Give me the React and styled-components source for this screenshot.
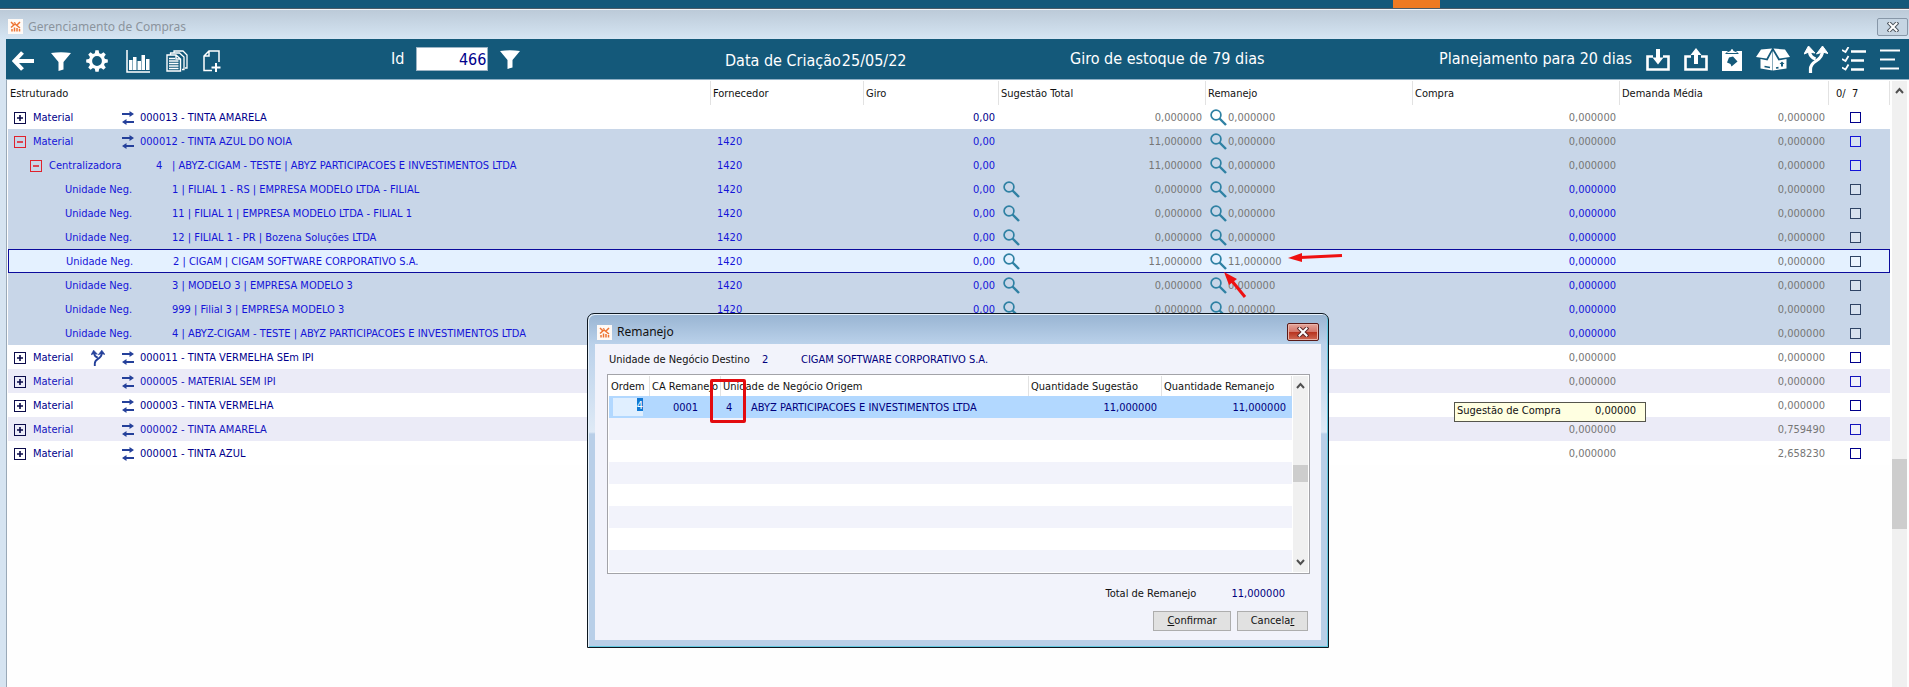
import React from 'react';
import styled, { createGlobalStyle, css } from 'styled-components';

const GlobalStyle = createGlobalStyle`
  * { box-sizing: border-box; }
  body {
    margin: 0;
    background: #fdfdfd;
    font-family: "DejaVu Sans Condensed", "DejaVu Sans", Tahoma, sans-serif;
    font-size: 11px;
    line-height: 16px;
    overflow-x: hidden;
  }
  button, input { font: inherit; }
  #root { min-height: 100vh; display: flex; }
`;

const Screen = styled.div`
  position: relative;
  flex: 1;
  min-width: 0;
  display: flex;
  flex-direction: column;
`;

const AppStrip = styled.div`
  height: 9px;
  background: #14597a;
  border-bottom: 1px solid #4b5c68;
  display: flex;
  justify-content: flex-end;
  padding-right: 469px;
`;

const ActiveMark = styled.span`
  width: 47px;
  height: 8px;
  background: #ee7a22;
`;

const MainWindow = styled.main`
  flex: 1;
  display: flex;
  flex-direction: column;
  background: #d6e4f1;
`;

const TitleBar = styled.header`
  height: 30px;
  padding: 4px 1px 0 8px;
  display: flex;
  align-items: center;
  gap: 5px;
  border-top: 1px solid #f2f5f8;
  background: linear-gradient(#bccad8, #d5e5f3);
  color: #8b949d;
`;

const WindowTitle = styled.h1`
  margin: 0;
  flex: 1;
  font: inherit;
  font-family: "Noto Sans", sans-serif;
  font-size: 12px;
`;

const TitleClose = styled.button`
  width: 31px;
  height: 18px;
  padding: 0;
  display: grid;
  place-items: center;
  border: 1px solid #8797a8;
  border-radius: 2px;
  background: #c6d5e3;
`;

const WindowBody = styled.div`
  flex: 1;
  margin-left: 6px;
  display: flex;
  flex-direction: column;
  background: #fefefe;
`;

const Toolbar = styled.div`
  height: 41px;
  display: flex;
  align-items: center;
  background: #14597a;
  border-bottom: 1px solid #8fb0c5;
  color: #fff;
  font-size: 16px;
  line-height: 20px;
`;

const ToolGroup = styled.div`
  display: flex;
  align-items: center;
  width: ${(p) => p.$width || 'auto'};
  margin-left: ${(p) => (p.$end ? 'auto' : 0)};
  padding: ${(p) => p.$pad || 0};
  gap: ${(p) => p.$gap || 0};
  white-space: nowrap;
`;

const ToolButton = styled.button`
  flex: none;
  width: ${(p) => p.$width || 24}px;
  height: 28px;
  padding: 0;
  border: 0;
  background: none;
  color: #fff;
  display: flex;
  align-items: center;
  justify-content: center;

  svg { flex: none; }
`;

const IdField = styled.input`
  width: 72px;
  height: 24px;
  margin: 0 12px;
  padding: 0 1px;
  border: 1px solid #9db4c4;
  background: #fff;
  color: #00008b;
  text-align: right;
`;

const Content = styled.div`
  flex: 1;
  display: flex;
  padding: 1px 2px 0 1px;
  border-left: 1px solid #9aa9b7;
`;

const GridArea = styled.div`
  flex: 1;
  min-width: 0;
`;

const Grid = styled.table`
  width: 100%;
  table-layout: fixed;
  border-collapse: separate;
  border-spacing: 0;
  white-space: pre;
`;

const HeadCell = styled.th`
  height: ${(p) => p.$height || 24}px;
  padding: 2px 2px 0 ${(p) => p.$indent || 2}px;
  border-right: 1px solid #e2e2e2;
  background: #fff;
  color: #111;
  font-weight: normal;
  text-align: left;
`;

const tones = {
  plain: ['#fff', '#00008b'],
  alt: ['#ebebf7', '#1414bd'],
  open: ['#c8d6e8', '#1414d8'],
  current: ['#e4f1ff', '#1414d8'],
};

const Row = styled.tr`
  height: 24px;
  color: ${(p) => tones[p.$tone][1]};
  & > td {
    background: ${(p) => tones[p.$tone][0]};
    ${(p) => p.$tone === 'current' && css`
      border-top: 1px solid #0b0b9c;
      border-bottom: 1px solid #0b0b9c;
      &:first-child { border-left: 1px solid #0b0b9c; }
      &:last-child { border-right: 1px solid #0b0b9c; }
    `}
  }
`;

const Cell = styled.td`
  padding: ${(p) => (p.$flush ? 0 : 2)}px ${(p) => (p.$pad === undefined ? 4 : p.$pad)}px 0;
  text-align: ${(p) => p.$align || 'left'};
  color: ${(p) => (p.$muted ? '#767676' : 'inherit')};
`;

const Flex = styled.div`
  display: flex;
  align-items: center;
  height: 20px;
  justify-content: ${(p) => (p.$spread ? 'space-between' : 'flex-start')};
`;

const TreeCell = styled(Flex)`
  padding-left: ${(p) => [6, 22, 37][p.$level]}px;
`;

const Toggle = styled.button`
  width: 12px;
  height: 12px;
  padding: 0;
  margin-right: 7px;
  display: grid;
  place-items: center;
  background: transparent;
  border: 1px solid ${(p) => (p.$open ? '#e0222c' : '#0b0b4a')};
  color: ${(p) => (p.$open ? '#e0222c' : '#0b0b4a')};
`;

const Kind = styled.span`
  width: ${(p) => [58, 107, 107][p.$level]}px;
`;

const Slot = styled.span`
  width: ${(p) => p.$width}px;
  height: 20px;
  display: flex;
  align-items: center;
`;

const LookupButton = styled.button`
  width: 18px;
  height: 18px;
  margin-bottom: 2px;
  padding: 0;
  border: 0;
  background: none;
  display: flex;
  align-items: center;
`;

const Check = styled.input`
  appearance: none;
  display: block;
  width: 11px;
  height: 11px;
  margin: 0 0 0 21px;
  color: ${(p) => (p.$leaf ? '#2f4364' : 'inherit')};
  border: 1px solid currentColor;
  background: rgba(255, 255, 255, 0.3);
`;

const Scroll = styled.div`
  width: ${(p) => p.$width}px;
  margin-left: ${(p) => p.$gap}px;
  display: flex;
  flex-direction: column;
  align-items: center;
  background: #f0f0f0;
  padding: 6px 0;
`;

const Thumb = styled.span`
  width: 100%;
  height: ${(p) => p.$size}px;
  margin-top: ${(p) => p.$offset}px;
  margin-bottom: auto;
  background: #cdcdcd;
`;

const Dialog = styled.section`
  position: absolute;
  left: 587px;
  top: 313px;
  width: 742px;
  border: 1px solid #0d1720;
  border-radius: 7px 7px 0 0;
  padding: 0 7px 7px;
  background: linear-gradient(#98b4d2, #bad1ea 30px, #dfeaf6 118px, #b9cfe8 120px);
  box-shadow: inset 1px 1px 0 #e8f2fb, inset -1px -1px 0 #62c8e0;
`;

const DialogTitle = styled.div`
  height: 30px;
  display: flex;
  align-items: center;
  gap: 5px;
  padding: 6px 2px 0;
  color: #111;
`;

const DialogClose = styled.button`
  width: 32px;
  height: 18px;
  padding: 0;
  display: grid;
  place-items: center;
  border: 1px solid #5a1a18;
  border-radius: 2px;
  background: linear-gradient(#e5a69b, #d4766a 48%, #b8331f 52%, #cf6a55);
  box-shadow: inset 0 0 0 1px #e9b4aa;
`;

const DialogBody = styled.div`
  background: #f2f3fb;
  padding: 6px 11px 9px 12px;
  color: #111;
`;

const Destination = styled.div`
  height: 24px;
  display: flex;
  align-items: flex-start;
  padding: 2px 0 0 2px;
`;

const Field = styled.span`
  width: ${(p) => (p.$width ? p.$width + 'px' : 'auto')};
  color: ${(p) => (p.$value ? '#00007d' : 'inherit')};
`;

const ListBox = styled.div`
  display: flex;
  border: 1px solid #a3a3a8;
  background: #fff;
  padding: 1px;
`;

const ListRow = styled.tr`
  height: 22px;
  color: #00007d;
  background: ${(p) => (p.$active ? '#b2d8ff' : p.$alt ? '#f2f3fb' : '#fff')};
`;

const OrderField = styled.input`
  display: block;
  width: 30px;
  height: 18px;
  padding: 0 0 4px;
  margin-left: 4px;
  border: 0;
  background: linear-gradient(#0f78d4, #0f78d4) right top / 6px 13px no-repeat #e0efff;
  color: #fff;
  text-align: right;
`;

const Totals = styled.div`
  display: flex;
  justify-content: flex-end;
  padding: 12px 25px 9px 0;
`;

const Actions = styled.div`
  display: flex;
  justify-content: flex-end;
  gap: 6px;
  padding-right: 2px;
`;

const DialogButton = styled.button`
  width: ${(p) => p.$width}px;
  height: 20px;
  padding: 0;
  border: 1px solid #adadad;
  background: #e1e1e1;
  color: #111;
`;

const Hint = styled.div`
  position: absolute;
  right: 263px;
  top: 402px;
  width: 192px;
  height: 20px;
  padding: 0 9px 0 2px;
  display: flex;
  justify-content: space-between;
  border: 1px solid #55554c;
  background: #ffffe1;
  color: #111;
`;

const Highlight = styled.div`
  position: absolute;
  left: 710px;
  top: 379px;
  width: 36px;
  height: 44px;
  border: 3px solid #e30b0f;
  border-radius: 2px;
`;

const Arrows = styled.svg`
  position: absolute;
  left: 1220px;
  top: 250px;
`;

const Logo = () => (
  <svg width="15" height="15" viewBox="0 0 15 15" aria-hidden="true">
    <rect width="15" height="15" fill="#fffaf6" />
    <g stroke="#ee7433" strokeWidth="1.500" fill="none">
      <path d="M3 3l3 3M9 6l3-3M6 3.500l1.500 1M3 8.500l4-3.500 5 4" />
      <path d="M4 12.500V10M6.500 12.500V8.500M9 12.500V9M11.500 12.500V10" />
    </g>
  </svg>
);

const CloseGlyph = ({ dark }) => (
  <svg width="12" height="10" viewBox="0 0 12 10" aria-hidden="true">
    <path d="M2.500 1.500l7 7M9.500 1.500l-7 7" stroke={dark ? '#4d565f' : '#5c2a2a'} strokeWidth="4" strokeLinecap="square" />
    <path d="M2.500 1.500l7 7M9.500 1.500l-7 7" stroke="#fff" strokeWidth="2" strokeLinecap="square" />
  </svg>
);

const Funnel = () => (
  <svg width="20" height="19" viewBox="0 0 20 19" aria-hidden="true">
    <path d="M0 1Q10-.7 20 1L12.500 10V17.500L7.500 19V10Z" fill="#fff" />
  </svg>
);

const BackArrow = () => (
  <svg width="22" height="20" viewBox="0 0 22 20" aria-hidden="true">
    <path d="M10.500 1.500L2.500 10L10.500 18.500M2.500 10H22" fill="none" stroke="#fff" strokeWidth="4" />
  </svg>
);

const Gear = () => (
  <svg width="22" height="22" viewBox="-11 -11 22 22" aria-hidden="true">
    <circle r="6.500" fill="none" stroke="#fff" strokeWidth="3.200" />
    {[0, 45, 90, 135, 180, 225, 270, 315].map((a) => (
      <path key={a} d="M-2.300-7L-1.600-10.800H1.600L2.300-7Z" fill="#fff" transform={`rotate(${a})`} />
    ))}
  </svg>
);

const Chart = () => (
  <svg width="24" height="23" viewBox="0 0 24 23" aria-hidden="true">
    <path d="M1 0V22H24" fill="none" stroke="#fff" strokeWidth="1.500" />
    <path d="M3 10h3.500v10H3zM7 7h3.500v13H7zM11.500 11h3.500v9h-3.500zM15.500 5h3.500v15h-3.500zM20 9h3.500v11h-3.500z" fill="#fff" />
  </svg>
);

const Copies = () => (
  <svg width="22" height="22" viewBox="0 0 22 22" aria-hidden="true" fill="none" stroke="#fff">
    <path d="M8 3V1h9l4 4v13h-2" strokeWidth="1.300" />
    <path d="M4.500 5V3h9l4.500 4v12.500h-2" strokeWidth="1.300" />
    <path d="M1 5h9l4.500 4v12H1zM10 5v4h4" strokeWidth="1.400" />
    <path d="M3 8.500h6M3 11h9.500M3 13.500h9.500M3 16h9.500M3 18.500h9.500" strokeWidth="1.400" />
  </svg>
);

const NewPage = () => (
  <svg width="18" height="22" viewBox="0 0 18 22" aria-hidden="true" fill="none" stroke="#fff">
    <path d="M9 20.500H1V6L6 1h10v11M6 1v5H1" strokeWidth="1.500" />
    <path d="M13 13v9M8.500 17.500h9" strokeWidth="2" />
  </svg>
);

const Tray = ({ up }) => (
  <svg width="24" height="23" viewBox="0 0 24 23" aria-hidden="true">
    <path d="M7 8.500H1.500V21.500H22.500V8.500H17" fill="none" stroke="#fff" strokeWidth="2.600" />
    <path d={up ? 'M12 0L17.500 7H14V16H10V7H6.500Z' : 'M10 1H14V9.500H17.500L12 16.500L6.500 9.500H10Z'} fill="#fff" />
  </svg>
);

const Clipboard = () => (
  <svg width="20" height="23" viewBox="0 0 20 23" aria-hidden="true">
    <path d="M0 3H20V23H0Z" fill="#fff" />
    <path d="M3 6H17L14 3H6Z" fill="#14597a" />
    <path d="M5 4.500L8.500 3Q10-1 11.500 3L15 4.500V5H5Z" fill="#fff" />
    <path d="M7 9.500L11 8.500L15.500 13.500L9.500 18.500L8.500 16L5 14.500Z" fill="#14597a" />
  </svg>
);

const Box = () => (
  <svg width="34" height="23" viewBox="0 0 34 23" aria-hidden="true">
    <path d="M5 1.500L16 .5L10.500 10.500L0 9ZM17.500.5L29 1.500L34 9L23.500 10.500ZM4.500 11L11.500 12.500L16.500 3V22.500L4.500 20.500ZM17 3L22.500 12.500L30.500 11V20.500L17 22.500Z" fill="#fff" />
    <path d="M8.500 18.500L14 19.500M20 20L22.500 19.600" stroke="#14597a" strokeWidth="1.600" />
    <path d="M25 18.500V16H23.500L26 13.500L28.500 16H27V18.500Z" fill="#14597a" />
  </svg>
);

const Branch = ({ color = '#fff', width = 24, height = 27 }) => (
  <svg width={width} height={height} viewBox="0 0 24 27" aria-hidden="true">
    <path d="M6.500 27V23Q6.500 18.500 12 15Q18.500 11 18.500 5M11.500 13Q6 11 5.500 6" fill="none" stroke={color} strokeWidth="3.200" />
    <path d="M12.500 8L18.500 0L24 7.500L18.500 6ZM0 8L4.500 0L11 7L5 6Z" fill={color} stroke={color} />
  </svg>
);

const TaskList = () => (
  <svg width="24" height="24" viewBox="0 0 24 24" aria-hidden="true" fill="none" stroke="#fff">
    <path d="M9 4.500H24M9 13.500H22M9 22.500H22" strokeWidth="2.400" />
    <path d="M0 3L3.500 5L6.500 0M0 12L3.500 14L6.500 9M0 20.500L3.500 22.500L6.500 17.500" strokeWidth="1.800" />
  </svg>
);

const Menu = () => (
  <svg width="20" height="22" viewBox="0 0 20 22" aria-hidden="true">
    <path d="M0 2.500H20M0 11.500H15M0 20.500H19" stroke="#fff" strokeWidth="2.200" />
  </svg>
);

const Swap = () => (
  <svg width="12" height="14" viewBox="0 0 12 14" aria-hidden="true">
    <path d="M0 3H9M12 11H3" stroke="#24409a" strokeWidth="2" />
    <path d="M7.500 0L12 3L7.500 6ZM4.500 8L0 11L4.500 14Z" fill="#24409a" />
  </svg>
);

const Lens = () => (
  <svg width="17" height="17" viewBox="0 0 17 17" aria-hidden="true">
    <circle cx="6" cy="6" r="4.900" fill="none" stroke="#2f81a3" strokeWidth="1.700" />
    <path d="M9.500 9.500L16 16" stroke="#2f81a3" strokeWidth="2.400" />
  </svg>
);

const ToggleGlyph = ({ open }) => (
  <svg width="6" height="6" viewBox="0 0 6 6" aria-hidden="true" stroke="currentColor" strokeWidth="1.600">
    <path d={open ? 'M0 3H6' : 'M0 3H6M3 0V6'} />
  </svg>
);

const Chevron = ({ down }) => (
  <svg width="9" height="7" viewBox="0 0 9 7" aria-hidden="true">
    <path d={down ? 'M1 1L4.500 5L8 1' : 'M1 6L4.500 2L8 6'} fill="none" stroke="#505050" strokeWidth="2" />
  </svg>
);

const Z = '0,000000';
const E = '11,000000';
const rows = [
  { level: 0, text: '000013 - TINTA AMARELA', tone: 'plain', noVendor: true, total: Z, re: Z, buy: Z, avg: Z, giro: '0,00' },
  { level: 0, text: '000012 - TINTA AZUL DO NOIA', tone: 'open', open: true, total: E, re: Z, buy: Z, avg: Z, giro: '0,00' },
  { level: 1, code: '4', text: '| ABYZ-CIGAM - TESTE | ABYZ PARTICIPACOES E INVESTIMENTOS LTDA', tone: 'open', open: true, total: E, re: Z, buy: Z, avg: Z, giro: '0,00' },
  { level: 2, text: '1 | FILIAL 1 - RS | EMPRESA MODELO LTDA - FILIAL', tone: 'open', total: Z, re: Z, buy: Z, avg: Z, giro: '0,00' },
  { level: 2, text: '11 | FILIAL 1 | EMPRESA MODELO LTDA - FILIAL 1', tone: 'open', total: Z, re: Z, buy: Z, avg: Z, giro: '0,00' },
  { level: 2, text: '12 | FILIAL 1 - PR | Bozena Soluções LTDA', tone: 'open', total: Z, re: Z, buy: Z, avg: Z, giro: '0,00' },
  { level: 2, text: '2 | CIGAM | CIGAM SOFTWARE CORPORATIVO S.A.', tone: 'current', total: E, re: E, buy: Z, avg: Z, giro: '0,00' },
  { level: 2, text: '3 | MODELO 3 | EMPRESA MODELO 3', tone: 'open', total: Z, re: Z, buy: Z, avg: Z, giro: '0,00' },
  { level: 2, text: '999 | Filial 3 | EMPRESA MODELO 3', tone: 'open', total: Z, re: Z, buy: Z, avg: Z, giro: '0,00' },
  { level: 2, text: '4 | ABYZ-CIGAM - TESTE | ABYZ PARTICIPACOES E INVESTIMENTOS LTDA', tone: 'open', covered: true, buy: Z, avg: Z },
  { level: 0, text: '000011 - TINTA VERMELHA SEm IPI', tone: 'plain', branch: true, covered: true, buy: Z, avg: Z },
  { level: 0, text: '000005 - MATERIAL SEM IPI', tone: 'alt', covered: true, buy: Z, avg: Z },
  { level: 0, text: '000003 - TINTA VERMELHA', tone: 'plain', covered: true, avg: Z },
  { level: 0, text: '000002 - TINTA AMARELA', tone: 'alt', covered: true, buy: Z, avg: '0,759490' },
  { level: 0, text: '000001 - TINTA AZUL', tone: 'plain', covered: true, buy: Z, avg: '2,658230' },
];
const kinds = ['Material', 'Centralizadora', 'Unidade Neg.'];

function GridRow({ row }) {
  return (
    <Row $tone={row.tone}>
      <Cell $pad={0}>
        <TreeCell $level={row.level}>
          {row.level < 2 && (
            <Toggle type="button" $open={row.open} aria-label={row.open ? 'Recolher' : 'Expandir'}>
              <ToggleGlyph open={row.open} />
            </Toggle>
          )}
          {row.level === 2 && <Slot $width={20} />}
          <Kind $level={row.level}>{kinds[row.level]}</Kind>
          {row.level === 0 && (
            <>
              <Slot $width={31}>{row.branch && <Branch color="#24409a" width={14} height={16} />}</Slot>
              <Slot $width={18}><Swap /></Slot>
            </>
          )}
          {row.code && <Slot $width={16}>{row.code}</Slot>}
          <span>{row.text}</span>
        </TreeCell>
      </Cell>
      <Cell $pad={6}>{row.covered || row.noVendor ? '' : '1420'}</Cell>
      <Cell $align="right">{row.giro}</Cell>
      <Cell $muted>
        <Flex $spread>
          {row.level === 2 && !row.covered ? (
            <LookupButton type="button" aria-label="Consultar sugestão"><Lens /></LookupButton>
          ) : <span />}
          <span>{row.total}</span>
        </Flex>
      </Cell>
      <Cell $muted>
        {!row.covered && (
          <Flex>
            <LookupButton type="button" aria-label="Consultar remanejo"><Lens /></LookupButton>
            <span>{row.re}</span>
          </Flex>
        )}
      </Cell>
      <Cell $align="right" $muted={row.level < 2}>{row.buy}</Cell>
      <Cell $align="right" $muted>{row.avg}</Cell>
      <Cell $flush $pad={0}>
        <Check type="checkbox" $leaf={row.level === 2} aria-label={`Selecionar ${row.text}`} />
      </Cell>
    </Row>
  );
}

function RemanejoDialog() {
  return (
    <Dialog role="dialog" aria-label="Remanejo">
      <DialogTitle>
        <Logo />
        <WindowTitle as="h2">Remanejo</WindowTitle>
        <DialogClose type="button" aria-label="Fechar"><CloseGlyph /></DialogClose>
      </DialogTitle>
      <DialogBody>
        <Destination>
          <Field $width={153}>Unidade de Negócio Destino</Field>
          <Field $value $width={39}>2</Field>
          <Field $value>CIGAM SOFTWARE CORPORATIVO S.A.</Field>
        </Destination>
        <ListBox>
          <GridArea>
            <Grid>
              <colgroup>
                <col width="41" /><col width="71" /><col /><col width="133" /><col width="130" />
              </colgroup>
              <thead>
                <tr>
                  {['Ordem', 'CA Remanejo', 'Unidade de Negócio Origem', 'Quantidade Sugestão', 'Quantidade Remanejo'].map((h) => (
                    <HeadCell key={h} $height={20}>{h}</HeadCell>
                  ))}
                </tr>
              </thead>
              <tbody>
                <ListRow $active>
                  <Cell $flush $pad={0}><OrderField aria-label="Ordem" defaultValue="4" /></Cell>
                  <Cell $pad={0} $align="center">0001</Cell>
                  <Cell $pad={5}><Flex><Slot $width={25}>4</Slot>ABYZ PARTICIPACOES E INVESTIMENTOS LTDA</Flex></Cell>
                  <Cell $pad={5} $align="right">{E}</Cell>
                  <Cell $pad={6} $align="right">{E}</Cell>
                </ListRow>
                {[1, 2, 3, 4, 5, 6, 7].map((n) => (
                  <ListRow key={n} $alt={n % 2 === 1}><td colSpan={5} /></ListRow>
                ))}
              </tbody>
            </Grid>
          </GridArea>
          <Scroll $width={15} $gap={1}>
            <Chevron />
            <Thumb $offset={76} $size={17} />
            <Chevron down />
          </Scroll>
        </ListBox>
        <Totals>
          <Field $width={126}>Total de Remanejo</Field>
          <Field $value>{E}</Field>
        </Totals>
        <Actions>
          <DialogButton type="button" $width={78}><u>C</u>onfirmar</DialogButton>
          <DialogButton type="button" $width={71}>Cancela<u>r</u></DialogButton>
        </Actions>
      </DialogBody>
    </Dialog>
  );
}

export default function App() {
  return (
    <Screen>
      <GlobalStyle />
      <AppStrip><ActiveMark /></AppStrip>
      <MainWindow>
        <TitleBar>
          <Logo />
          <WindowTitle>Gerenciamento de Compras</WindowTitle>
          <TitleClose type="button" aria-label="Fechar janela"><CloseGlyph dark /></TitleClose>
        </TitleBar>
        <WindowBody>
          <Toolbar>
            <ToolGroup $width="385px" $pad="4px 0 0 6px">
              <ToolButton aria-label="Voltar" $width={22}><BackArrow /></ToolButton>
              <ToolButton aria-label="Filtrar" $width={54}><Funnel /></ToolButton>
              <ToolButton aria-label="Configurar" $width={18}><Gear /></ToolButton>
              <ToolButton aria-label="Gráfico" $width={64}><Chart /></ToolButton>
              <ToolButton aria-label="Copiar" $width={14}><Copies /></ToolButton>
              <ToolButton aria-label="Novo" $width={56}><NewPage /></ToolButton>
            </ToolGroup>
            <ToolGroup $width="334px">
              <label htmlFor="plan-id">Id</label>
              <IdField id="plan-id" defaultValue="466" />
              <ToolButton aria-label="Buscar id" $width={20}><Funnel /></ToolButton>
            </ToolGroup>
            <ToolGroup $width="345px" $gap="1px" $pad="4px 0 0"><span>Data de Criação</span><span>25/05/22</span></ToolGroup>
            <ToolGroup $gap="5px"><span>Giro de estoque de</span><span>79 dias</span></ToolGroup>
            <ToolGroup $end $pad="0 9px 0 0" $gap="14px">
              <span>Planejamento para 20 dias</span>
              <ToolButton aria-label="Importar"><Tray /></ToolButton>
              <ToolButton aria-label="Exportar"><Tray up /></ToolButton>
              <ToolButton aria-label="Pedido" $width={20}><Clipboard /></ToolButton>
              <ToolButton aria-label="Caixa" $width={34}><Box /></ToolButton>
              <ToolButton aria-label="Remanejar"><Branch /></ToolButton>
              <ToolButton aria-label="Tarefas"><TaskList /></ToolButton>
              <ToolButton aria-label="Menu" $width={20}><Menu /></ToolButton>
            </ToolGroup>
          </Toolbar>
          <Content>
            <GridArea>
              <Grid>
                <colgroup>
                  <col /><col width="153" /><col width="135" /><col width="207" />
                  <col width="207" /><col width="207" /><col width="209" /><col width="61" />
                </colgroup>
                <thead>
                  <tr>
                    {['Estruturado', 'Fornecedor', 'Giro', 'Sugestão Total', 'Remanejo', 'Compra', 'Demanda Média'].map((h) => (
                      <HeadCell key={h}>{h}</HeadCell>
                    ))}
                    <HeadCell $indent={7}>{'0/  7'}</HeadCell>
                  </tr>
                </thead>
                <tbody>
                  {rows.map((r) => <GridRow key={r.text} row={r} />)}
                </tbody>
              </Grid>
            </GridArea>
            <Scroll $width={15} $gap={2}>
              <Chevron />
              <Thumb $offset={365} $size={70} />
            </Scroll>
          </Content>
        </WindowBody>
      </MainWindow>
      <RemanejoDialog />
      <Hint><span>Sugestão de Compra</span><span>0,00000</span></Hint>
      <Highlight />
      <Arrows width="126" height="50" viewBox="0 0 126 50" aria-hidden="true">
        <path d="M80 7.500L122 5.500M12 31L25 47" stroke="#ee1111" strokeWidth="3" />
        <path d="M68 8L82 3V12ZM4 22L9 35L17 29Z" fill="#ee1111" />
      </Arrows>
    </Screen>
  );
}
